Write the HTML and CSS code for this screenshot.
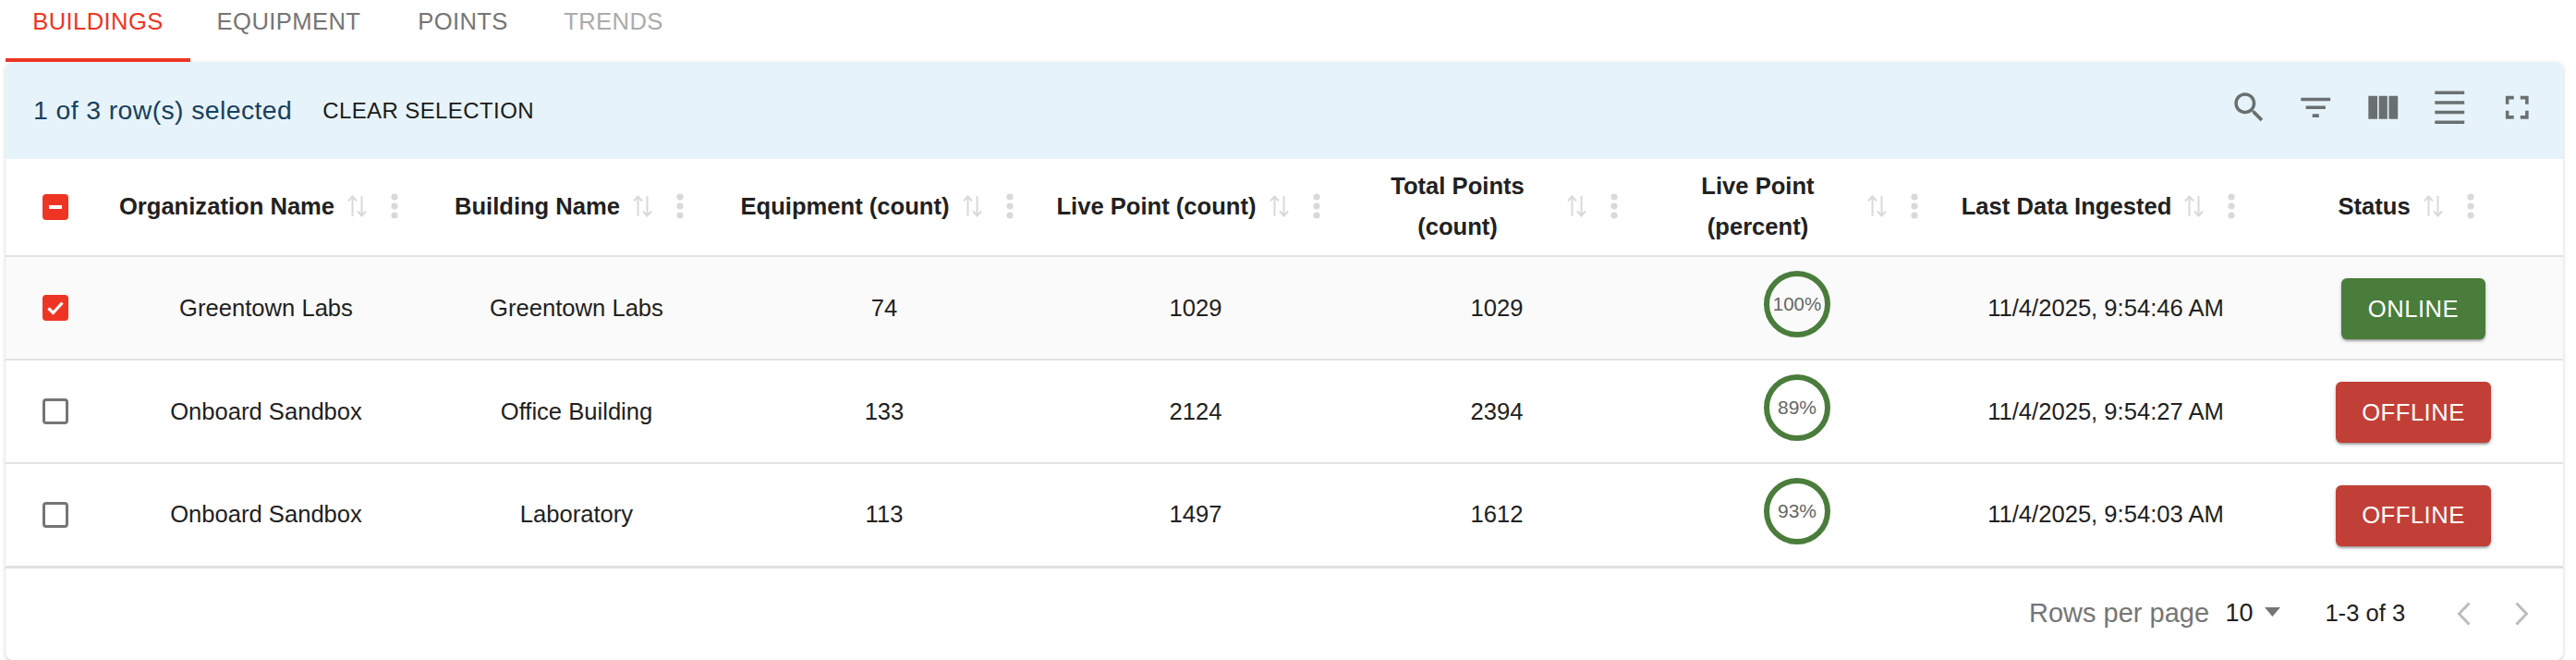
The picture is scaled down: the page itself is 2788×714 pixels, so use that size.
FILE: index.html
```html
<!DOCTYPE html>
<html lang="en">
<head>
<meta charset="utf-8">
<title>Buildings</title>
<link rel="stylesheet" href="styles.css">
</head>
<body>
<svg class="defs" width="0" height="0" aria-hidden="true">
  <symbol id="sort" viewBox="0 0 21 24"><path d="M5.500 23V1.500M1 6.500l4.500-5 4.500 5" fill="none" stroke="currentColor" stroke-width="2"/><path d="M15.500 1v21.500M11 17.500l4.500 5 4.500-5" fill="none" stroke="currentColor" stroke-width="2"/></symbol>
  <symbol id="dots" viewBox="0 0 8 28"><circle cx="4" cy="4" r="3.600" fill="currentColor"/><circle cx="4" cy="14" r="3.600" fill="currentColor"/><circle cx="4" cy="24" r="3.600" fill="currentColor"/></symbol>
</svg>
<nav class="tabs">
  <a class="tab active">BUILDINGS</a>
  <a class="tab">EQUIPMENT</a>
  <a class="tab">POINTS</a>
  <a class="tab disabled">TRENDS</a>
</nav>
<section class="card">
  <header class="toolbar">
    <div class="selection">
      <span class="sel-text">1 of 3 row(s) selected</span>
      <button class="clear">CLEAR SELECTION</button>
    </div>
    <div class="tools">
      <svg class="tool" viewBox="0 0 24 24"><path d="M15.500 14h-.79l-.28-.27C15.410 12.590 16 11.110 16 9.500 16 5.910 13.090 3 9.500 3S3 5.910 3 9.500 5.910 16 9.500 16c1.610 0 3.090-.59 4.230-1.570l.27.28v.79l5 4.990L20.490 19l-4.990-5zm-6 0C7.010 14 5 11.990 5 9.500S7.010 5 9.500 5 14 7.010 14 9.500 11.990 14 9.500 14z"/></svg>
      <svg class="tool" viewBox="0 0 24 24"><path d="M10 18h4v-2h-4v2zM3 6v2h18V6H3zm3 7h12v-2H6v2z"/></svg>
      <svg class="tool" viewBox="0 0 24 24"><path d="M3 5h5.500v14H3zM9.400 5h5.200v14H9.400zM15.500 5H21v14h-5.500z"/></svg>
      <svg class="tool" viewBox="0 0 24 24"><path d="M3 2h18v2H3zm0 18h18v2H3zm0-6h18v2H3zm0-6h18v2H3z"/></svg>
      <svg class="tool" viewBox="0 0 24 24"><path d="M7 14H5v5h5v-2H7v-3zm-2-4h2V7h3V5H5v5zm12 7h-3v2h5v-5h-2v3zM14 5v2h3v3h2V5h-5z"/></svg>
    </div>
  </header>
  <table class="grid">
    <colgroup>
      <col class="c-check"><col class="c-org"><col class="c-bld"><col class="c-eq"><col class="c-live"><col class="c-total"><col class="c-pct"><col class="c-date"><col class="c-status">
    </colgroup>
    <thead>
      <tr>
        <th class="check-cell"><span class="cb indeterminate"><i></i></span></th>
        <th><div class="hd"><span>Organization Name</span><svg class="sort"><use href="#sort"/></svg><svg class="dots"><use href="#dots"/></svg></div></th>
        <th><div class="hd"><span>Building Name</span><svg class="sort"><use href="#sort"/></svg><svg class="dots"><use href="#dots"/></svg></div></th>
        <th><div class="hd"><span>Equipment (count)</span><svg class="sort"><use href="#sort"/></svg><svg class="dots"><use href="#dots"/></svg></div></th>
        <th><div class="hd"><span>Live Point (count)</span><svg class="sort"><use href="#sort"/></svg><svg class="dots"><use href="#dots"/></svg></div></th>
        <th><div class="hd"><span class="wrap">Total Points<br>(count)</span><svg class="sort"><use href="#sort"/></svg><svg class="dots"><use href="#dots"/></svg></div></th>
        <th><div class="hd"><span class="wrap">Live Point<br>(percent)</span><svg class="sort"><use href="#sort"/></svg><svg class="dots"><use href="#dots"/></svg></div></th>
        <th><div class="hd"><span>Last Data Ingested</span><svg class="sort"><use href="#sort"/></svg><svg class="dots"><use href="#dots"/></svg></div></th>
        <th class="last"><div class="hd"><span>Status</span><svg class="sort"><use href="#sort"/></svg><svg class="dots"><use href="#dots"/></svg></div></th>
      </tr>
    </thead>
    <tbody>
      <tr class="selected">
        <td class="check-cell"><span class="cb checked"><svg viewBox="0 0 28 28"><path d="M6.500 14.500l5 5 10-11" fill="none" stroke="#fff" stroke-width="3.200"/></svg></span></td>
        <td>Greentown Labs</td><td>Greentown Labs</td><td>74</td><td>1029</td><td>1029</td>
        <td><div class="pct pct-long">100%</div></td>
        <td>11/4/2025, 9:54:46 AM</td>
        <td class="last"><button class="status online">ONLINE</button></td>
      </tr>
      <tr>
        <td class="check-cell"><span class="cb"></span></td>
        <td>Onboard Sandbox</td><td>Office Building</td><td>133</td><td>2124</td><td>2394</td>
        <td><div class="pct">89%</div></td>
        <td>11/4/2025, 9:54:27 AM</td>
        <td class="last"><button class="status offline">OFFLINE</button></td>
      </tr>
      <tr class="final">
        <td class="check-cell"><span class="cb"></span></td>
        <td>Onboard Sandbox</td><td>Laboratory</td><td>113</td><td>1497</td><td>1612</td>
        <td><div class="pct">93%</div></td>
        <td>11/4/2025, 9:54:03 AM</td>
        <td class="last"><button class="status offline">OFFLINE</button></td>
      </tr>
    </tbody>
  </table>
  <footer class="pager">
    <span class="rpp-label">Rows per page</span>
    <span class="rpp-value">10</span>
    <svg class="caret" viewBox="0 0 17 10"><path d="M0 0h17L8.500 10z"/></svg>
    <span class="range">1-3 of 3</span>
    <svg class="chev prev" viewBox="0 0 15 26"><path d="M13.500 1.500L2.500 13l11 11.500" fill="none" stroke="currentColor" stroke-width="3"/></svg>
    <svg class="chev" viewBox="0 0 15 26"><path d="M1.500 1.500L12.500 13l-11 11.500" fill="none" stroke="currentColor" stroke-width="3"/></svg>
  </footer>
</section>
</body>
</html>
```
FILE: styles.css
```css
* { box-sizing: border-box; }
html, body { margin: 0; height: 714px; overflow: hidden; background: #fff; }
body { font-family: "Liberation Sans", Arial, sans-serif; color: #212121; font-size: 25.600px; }
.defs { position: absolute; }

.tabs { display: flex; height: 67px; padding-left: 6px; }
.tab { width: 213px; height: 67px; padding-top: 9px; line-height: 28px; text-align: center; color: #757575; font-size: 25.600px; letter-spacing: .4px; }
.tab:nth-child(1) { width: 200px; }
.tab:nth-child(3) { width: 164px; }
.tab:nth-child(4) { width: 162px; }
.tab.active { color: #ee3524; border-bottom: 4px solid #ee3524; }
.tab.disabled { color: #ababab; }

.card { margin-left: 6px; width: 2768px; height: 647px; background: #fff; border-radius: 8px; box-shadow: 0 2px 4px -1px rgba(0,0,0,.2), 0 1px 6px rgba(0,0,0,.08); overflow: hidden; }

.toolbar { height: 105px; background: #e6f3fa; display: flex; justify-content: space-between; align-items: center; padding: 0 29px 0 30px; }
.selection { display: flex; align-items: center; gap: 33px; }
.sel-text { color: #17405f; font-size: 28.400px; letter-spacing: .4px; }
.clear { background: none; border: 0; padding: 0; font: inherit; font-size: 24px; letter-spacing: .4px; color: #1a1a1a; }
.tools { display: flex; gap: 30px; margin-top: -6px; }
.tool { width: 42.500px; height: 42.500px; fill: #6a6f71; }

.grid { width: 2768px; table-layout: fixed; border-collapse: collapse; }
.c-check { width: 94px; } .c-org { width: 376px; } .c-bld { width: 296px; } .c-eq { width: 370px; }
.c-live { width: 304px; } .c-total { width: 348px; } .c-pct { width: 302px; } .c-date { width: 366px; } .c-status { width: 312px; }

th, td { padding: 0; text-align: center; vertical-align: middle; font-size: 25.600px; }
thead tr { height: 105px; border-bottom: 2px solid #e3e3e3; }
tbody tr { height: 112px; border-bottom: 2px solid #e3e3e3; }
tbody tr.selected { background: #fafafa; }
tbody tr.final { border-bottom: 3px solid #e0e0e0; }
th { padding-right: 16px; font-weight: 700; }
th.check-cell { padding-right: 0; }
.last { padding-right: 12px; }
th.last { padding-right: 28px; }

.hd { display: flex; align-items: center; justify-content: center; line-height: 44px; margin-top: -2px; }
.wrap { width: 208px; }
.sort { width: 21px; height: 24px; margin-left: 14px; color: #d9d9d9; flex: none; }
.dots { width: 8px; height: 28px; margin-left: 26px; color: #d9d9d9; flex: none; }

.check-cell { text-align: left; padding-left: 40px; }
.cb { display: flex; align-items: center; justify-content: center; width: 28px; height: 28px; border: 3px solid #757575; border-radius: 4px; }
.cb.checked, .cb.indeterminate { background: #ee3524; border: 0; }
.cb.checked svg { width: 28px; height: 28px; }
.cb.indeterminate i { width: 14px; height: 4px; background: #fff; }

.pct { width: 72px; height: 72px; margin: 0 auto 8px; border: 6px solid #4a7c3c; border-radius: 50%; display: flex; align-items: center; justify-content: center; font-size: 21px; color: #666; }
.pct-long { font-size: 20.500px; }

.status { display: inline-block; border: 0; color: #fff; font: inherit; font-size: 25.600px; letter-spacing: .5px; height: 66px; margin-top: 2px; padding: 0 28.500px; border-radius: 6px; box-shadow: 0 3px 3px -2px rgba(0,0,0,.3), 0 2px 3px rgba(0,0,0,.16), 0 1px 5px rgba(0,0,0,.12); vertical-align: middle; }
.online { background: #4a7c3c; }
.offline { background: #c23f37; }

.pager { display: flex; align-items: center; height: 98px; padding: 0 37px 0 2190px; }
.rpp-label { color: #757575; font-size: 29px; width: 213px; }
.rpp-value { font-size: 27px; width: 43px; }
.caret { width: 17px; height: 10px; fill: #757575; margin-top: -4px; }
.range { font-size: 25.600px; margin-left: 48px; width: 143px; }
.chev { width: 15px; height: 26px; color: #bdbdbd; }
.prev { margin-right: 48px; }
```
